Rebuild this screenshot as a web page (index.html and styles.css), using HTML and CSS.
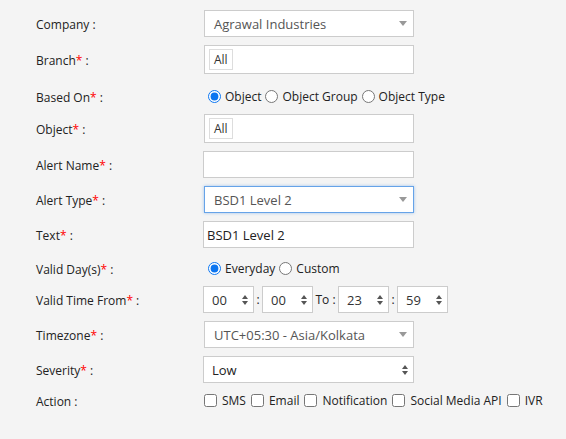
FILE: index.html
```html
<!DOCTYPE html>
<html lang="en">

<head>
  <meta charset="UTF-8">
  <title>Alert</title>
  <link rel="stylesheet" href="styles.css">
</head>

<body>
  <form class="alert-form">
    <div class="row h27">
      <label class="label">Company :</label>
      <div class="select combo">
        <span>Agrawal Industries</span>
        <svg class="caret" width="8" height="5" viewBox="0 0 8 5"><path d="M0 0H8L4 5Z" fill="#999"/></svg>
      </div>
    </div>
    <div class="row h29">
      <label class="label">Branch<span class="req">*</span> :</label>
      <div class="tagbox"><span class="tag">All</span></div>
    </div>
    <div class="row radio-row based">
      <label class="label">Based On<span class="req">*</span> :</label>
      <div class="choices">
        <label class="choice"><input type="radio" name="based" checked> Object</label>
        <label class="choice"><input type="radio" name="based"> Object Group</label>
        <label class="choice"><input type="radio" name="based"> Object Type</label>
      </div>
    </div>
    <div class="row h29">
      <label class="label">Object<span class="req">*</span> :</label>
      <div class="tagbox"><span class="tag">All</span></div>
    </div>
    <div class="row h27">
      <label class="label">Alert Name<span class="req">*</span> :</label>
      <input class="text" type="text">
    </div>
    <div class="row h27">
      <label class="label">Alert Type<span class="req">*</span> :</label>
      <div class="select combo focus">
        <span>BSD1 Level 2</span>
        <svg class="caret" width="8" height="5" viewBox="0 0 8 5"><path d="M0 0H8L4 5Z" fill="#999"/></svg>
      </div>
    </div>
    <div class="row h27">
      <label class="label">Text<span class="req">*</span> :</label>
      <input class="text" type="text" value="BSD1 Level 2">
    </div>
    <div class="row radio-row days">
      <label class="label">Valid Day(s)<span class="req">*</span> :</label>
      <div class="choices">
        <label class="choice"><input type="radio" name="days" checked> Everyday</label>
        <label class="choice"><input type="radio" name="days"> Custom</label>
      </div>
    </div>
    <div class="row h27">
      <label class="label">Valid Time From<span class="req">*</span> :</label>
      <div class="times">
        <div class="select time"><span>00</span><svg class="spin" width="6" height="10" viewBox="0 0 6 10"><path d="M0 4H6L3 0ZM0 6H6L3 10Z" fill="#555"/></svg></div>
        <span class="sep">:</span>
        <div class="select time"><span>00</span><svg class="spin" width="6" height="10" viewBox="0 0 6 10"><path d="M0 4H6L3 0ZM0 6H6L3 10Z" fill="#555"/></svg></div>
        <span class="to">To :</span>
        <div class="select time"><span>23</span><svg class="spin" width="6" height="10" viewBox="0 0 6 10"><path d="M0 4H6L3 0ZM0 6H6L3 10Z" fill="#555"/></svg></div>
        <span class="sep">:</span>
        <div class="select time"><span>59</span><svg class="spin" width="6" height="10" viewBox="0 0 6 10"><path d="M0 4H6L3 0ZM0 6H6L3 10Z" fill="#555"/></svg></div>
      </div>
    </div>
    <div class="row h27">
      <label class="label">Timezone<span class="req">*</span> :</label>
      <div class="select combo">
        <span>UTC+05:30 - Asia/Kolkata</span>
        <svg class="caret" width="8" height="5" viewBox="0 0 8 5"><path d="M0 0H8L4 5Z" fill="#999"/></svg>
      </div>
    </div>
    <div class="row h27">
      <label class="label">Severity<span class="req">*</span> :</label>
      <div class="select plain">
        <span>Low</span>
        <svg class="spin" width="6" height="10" viewBox="0 0 6 10"><path d="M0 4H6L3 0ZM0 6H6L3 10Z" fill="#555"/></svg>
      </div>
    </div>
    <div class="row h18">
      <label class="label">Action :</label>
      <div class="checks">
        <label class="check"><input type="checkbox"> SMS</label>
        <label class="check"><input type="checkbox"> Email</label>
        <label class="check"><input type="checkbox"> Notification</label>
        <label class="check"><input type="checkbox"> Social Media API</label>
        <label class="check"><input type="checkbox"> IVR</label>
      </div>
    </div>
  </form>
</body>

</html>
```

FILE: styles.css
```css
body {
  margin: 0;
  background-color: #f4f4f4;
  font-family: "Open Sans", "Noto Sans", sans-serif;
  font-size: 12px;
  color: #222;
}

.alert-form {
  display: flex;
  flex-direction: column;
  gap: 8px;
  padding: 10px 0 0 36px;
}

.row {
  display: flex;
  align-items: center;
  box-sizing: border-box;
}

.row.h27 { height: 27px; }
.row.h29 { height: 29px; }
.row.h18 { height: 18px; }

.row.radio-row.based {
  height: 24px;
  padding-top: 4px;
}

.row.radio-row.days {
  height: 22px;
  padding-top: 2px;
}

.label {
  width: 167px;
  flex: none;
  padding-top: 2px;
}

.req {
  color: #f00;
}

.select {
  box-sizing: border-box;
  height: 27px;
  display: flex;
  align-items: center;
  justify-content: space-between;
  background-color: #fff;
  border: 1px solid #ccc;
  font-size: 13px;
  color: #555;
}

.select.combo {
  width: 210px;
  margin-left: 1px;
  padding: 0 6px 0 9px;
}

.select.combo.focus {
  border-color: #66a3e8;
  box-shadow: 0 0 3px rgba(102, 163, 232, 0.6);
}

.select.plain {
  width: 211px;
  padding: 0 5px 0 8px;
  color: #222;
}

.select.time {
  width: 51px;
  padding: 0 5px 0 8px;
  color: #333;
}

.tagbox {
  box-sizing: border-box;
  width: 210px;
  height: 29px;
  margin-left: 1px;
  padding: 3px 4px;
  background-color: #fff;
  border: 1px solid #ccc;
  display: flex;
  align-items: center;
}

.tag {
  box-sizing: border-box;
  height: 21px;
  padding: 0 4px;
  border: 1px solid #ddd;
  line-height: 19px;
  font-size: 12px;
  color: #333;
}

.text {
  box-sizing: border-box;
  width: 211px;
  height: 27px;
  margin: 0;
  padding: 0 3px;
  background-color: #fff;
  border: 1px solid #ccc;
  font-family: inherit;
  font-size: 13px;
  color: #222;
  outline: none;
}

.choices,
.checks {
  display: flex;
  align-items: center;
}

.choice,
.check {
  display: flex;
  align-items: center;
}

.choice input {
  width: 13px;
  height: 13px;
  margin: 0 4px 0 4px;
  accent-color: #0b75f0;
}

.choice:first-child input {
  margin-left: 5px;
}

.check input {
  width: 13px;
  height: 13px;
  margin: 0 5px 0 5px;
}

.check:first-child input {
  margin-left: 1px;
}

.times {
  display: flex;
  align-items: center;
}

.sep {
  width: 8px;
  text-align: center;
}

.to {
  width: 25px;
  text-align: center;
}
```
